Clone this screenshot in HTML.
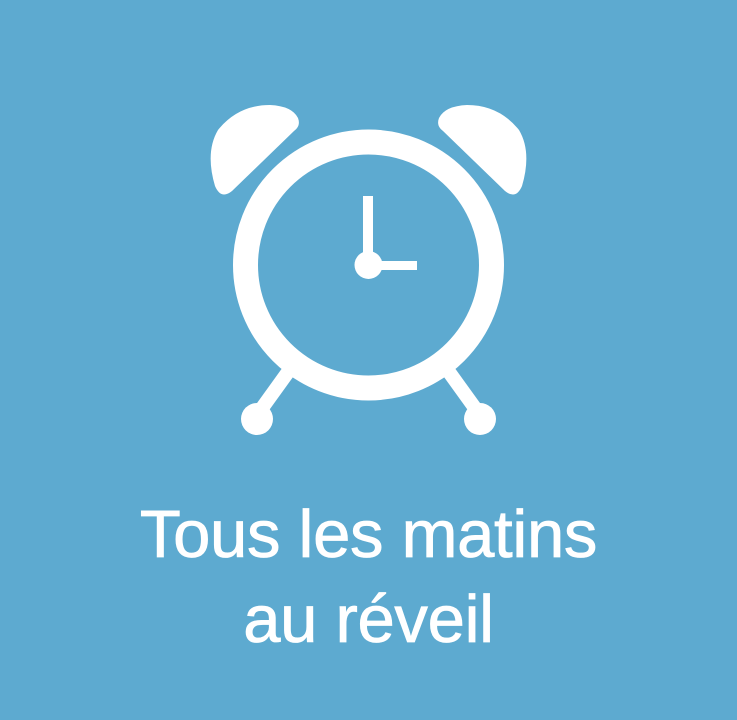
<!DOCTYPE html>
<html><head><meta charset="utf-8"><style>
html,body{margin:0;padding:0}
body{width:737px;height:720px;background:#5daad0;position:relative;overflow:hidden}
svg{position:absolute;left:0;top:0}
.t{position:absolute;left:0;top:492px;width:737px;text-align:center;color:#fff;font-family:"Liberation Sans",sans-serif;font-size:67px;line-height:85px;letter-spacing:-0.3px;-webkit-text-stroke:0.8px #fff}
</style></head><body>
<svg width="737" height="720" viewBox="0 0 737 720">
<g fill="#fff">
<path id="b" d="M298,118 Q301,126 294,131 L232,191 Q221,200 215,186 Q205,152 218,130 Q238,105 270,105 Q292,106 298,118 Z"/>
<use href="#b" transform="translate(737,0) scale(-1,1)"/>
<circle cx="368.5" cy="265" r="14"/>
<rect x="363" y="196" width="10" height="69"/>
<rect x="368" y="261" width="49" height="9"/>
<circle cx="257" cy="419" r="16"/>
<circle cx="480" cy="419" r="16"/>
</g>
<circle cx="368.5" cy="265" r="123" fill="none" stroke="#fff" stroke-width="25"/>
<g stroke="#fff" stroke-width="14">
<line x1="288" y1="372" x2="257" y2="415"/>
<line x1="449" y1="372" x2="480" y2="415"/>
</g>
</svg>
<div class="t">Tous les matins<br>au réveil</div>
</body></html>
